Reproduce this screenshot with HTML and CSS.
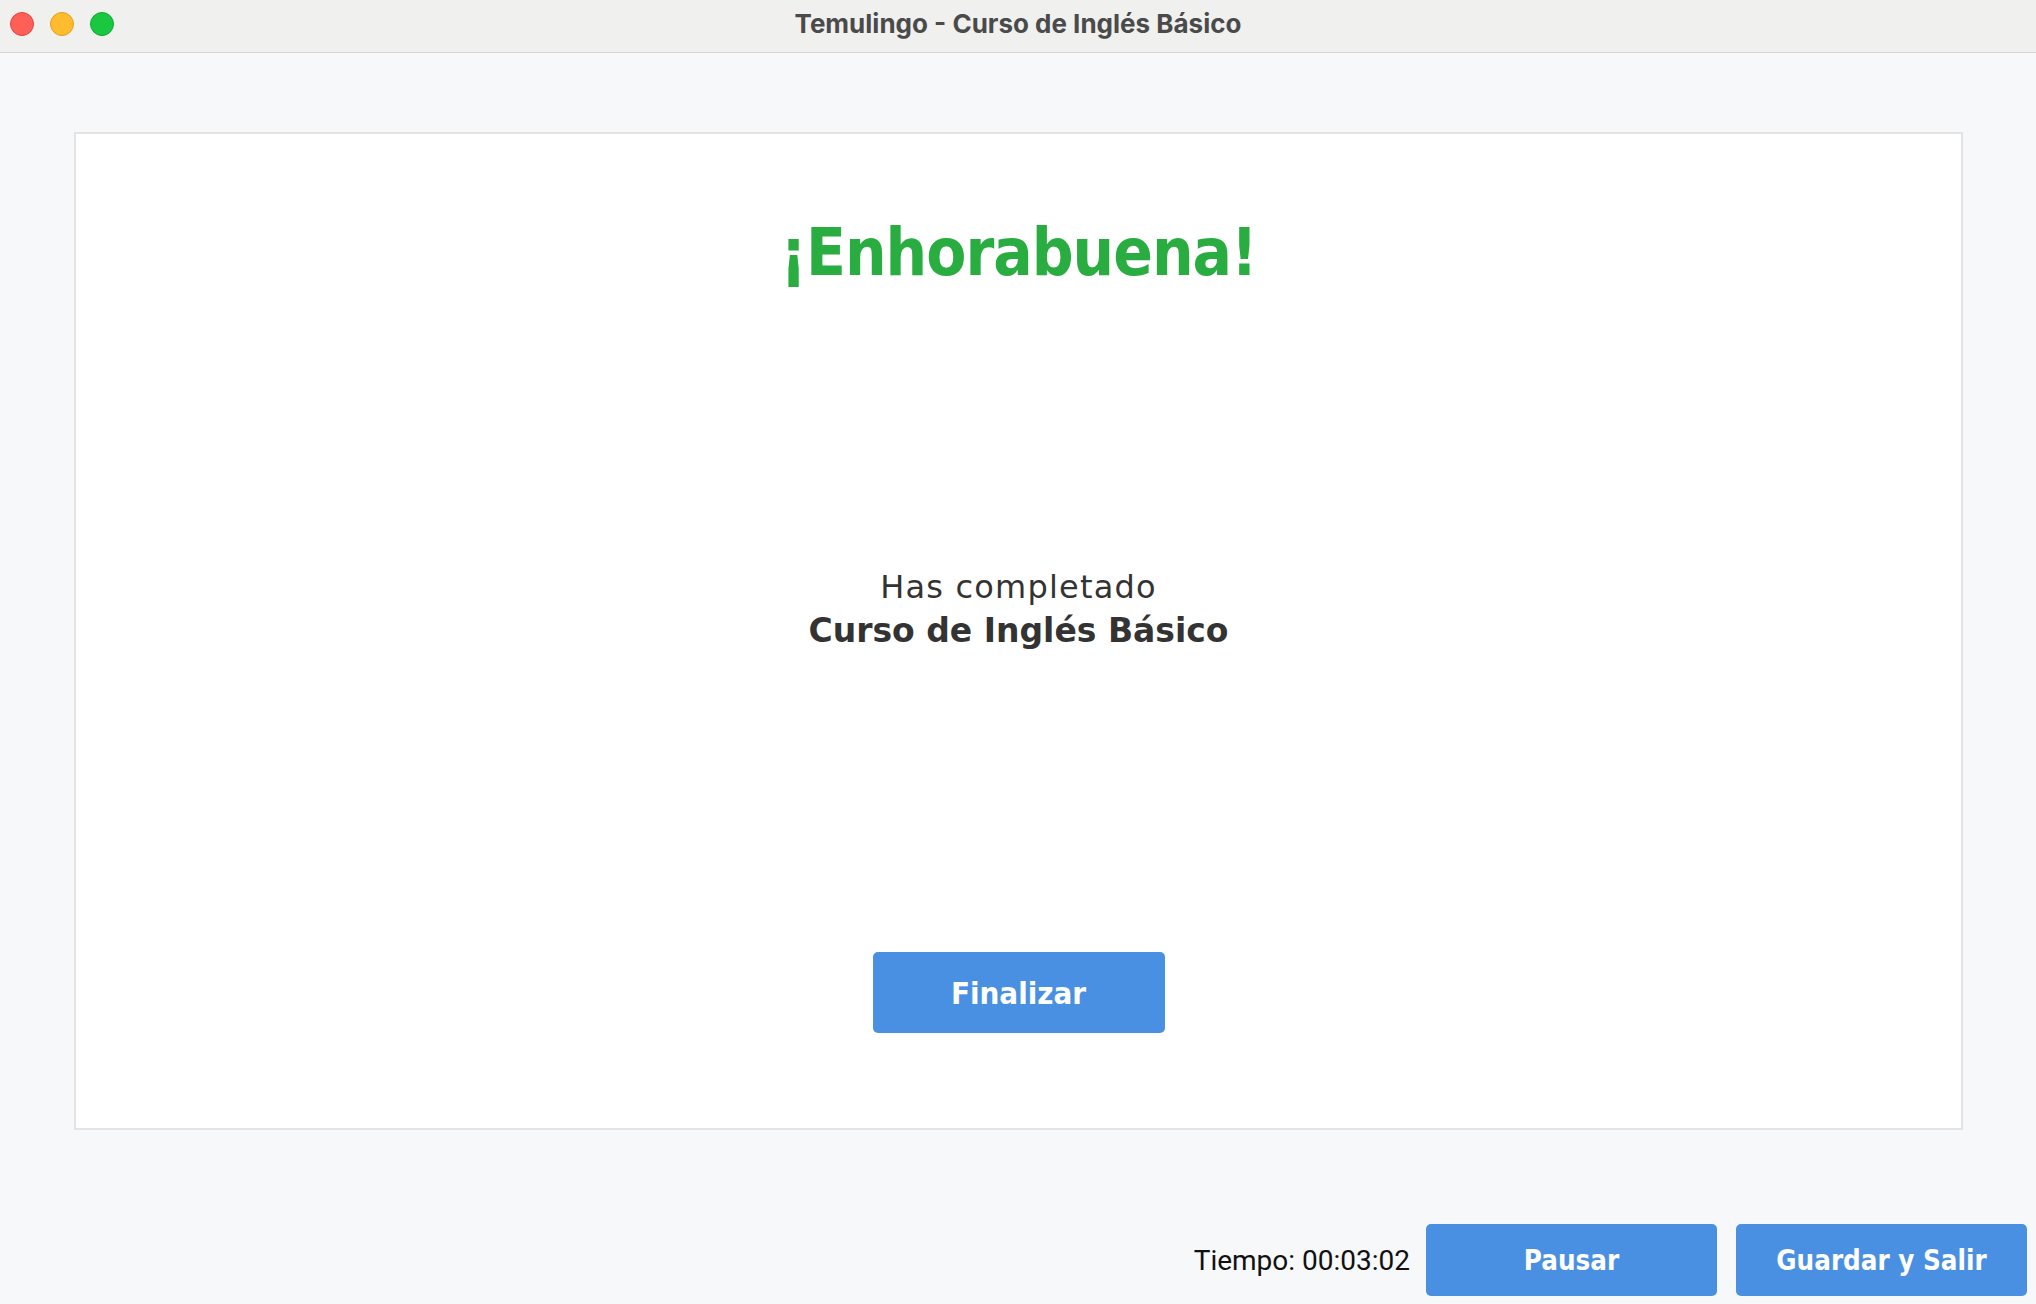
FILE: index.html
```html
<!DOCTYPE html>
<html lang="es">
<head>
<meta charset="utf-8">
<title>Temulingo - Curso de Inglés Básico</title>
<link rel="stylesheet" href="styles.css">
</head>
<body>
<div class="window">
  <header class="titlebar">
    <div class="lights">
      <span class="light red"></span>
      <span class="light yellow"></span>
      <span class="light green"></span>
    </div>
    <div class="title">Temulingo - Curso de Inglés Básico</div>
  </header>
  <main class="content">
    <section class="card">
      <h1 class="heading">¡Enhorabuena!</h1>
      <div class="message">
        <div class="line">Has completado</div>
        <div class="line strong">Curso de Inglés Básico</div>
      </div>
      <button class="btn btn-finish">Finalizar</button>
    </section>
    <footer class="footer">
      <span class="timer">Tiempo: 00:03:02</span>
      <button class="btn btn-foot">Pausar</button>
      <button class="btn btn-foot">Guardar y Salir</button>
    </footer>
  </main>
</div>
</body>
</html>
```

FILE: styles.css
```css
* { box-sizing: border-box; }
html, body { margin: 0; padding: 0; }
body {
  width: 2036px;
  height: 1304px;
  overflow: hidden;
  background: #f7f8fa;
  font-family: "DejaVu Sans", sans-serif;
}
.window {
  display: flex;
  flex-direction: column;
  height: 1304px;
}
.titlebar {
  position: relative;
  height: 53px;
  flex: none;
  background: #f0f0ef;
  border-bottom: 1px solid #d5d5d5;
  display: flex;
  align-items: center;
  justify-content: center;
}
.lights {
  position: absolute;
  left: 10px;
  top: 12px;
  display: flex;
  gap: 16px;
}
.light {
  width: 24px;
  height: 24px;
  border-radius: 50%;
  display: block;
}
.light.red { background: #fe5f57; border: 1px solid #e14640; }
.light.yellow { background: #febc2e; border: 1px solid #dea123; }
.light.green { background: #19c840; border: 1px solid #13a831; }
.title {
  font-family: Inter, "Liberation Sans", sans-serif;
  font-weight: 700;
  font-size: 26px;
  color: #4a4a4a;
  margin-top: -6px;
}
.content {
  flex: 1;
  display: flex;
  flex-direction: column;
  padding: 79px 9px 8px 74px;
}
.card {
  width: 1889px;
  height: 998px;
  flex: none;
  background: #ffffff;
  border: 2px solid #e3e3e3;
  display: flex;
  flex-direction: column;
  align-items: center;
}
.heading {
  margin: 79px 0 0 0;
  height: 80px;
  line-height: 80px;
  font-family: "DejaVu Sans Condensed", "DejaVu Sans", sans-serif;
  font-weight: 700;
  font-size: 65px;
  letter-spacing: -1px;
  color: #2aad40;
}
.message {
  margin-top: 272px;
  text-align: center;
  color: #333333;
  font-size: 32px;
  line-height: 44px;
}
.line { letter-spacing: 1.2px; }
.line.strong { font-weight: 700; font-size: 33px; letter-spacing: 0; }
.btn {
  border: none;
  background: #4a90e2;
  color: #ffffff;
  border-radius: 5px;
  font-family: "DejaVu Sans Condensed", "DejaVu Sans", sans-serif;
  font-weight: 700;
  padding: 0;
  cursor: pointer;
}
.btn-finish {
  margin-top: 299px;
  width: 292px;
  height: 81px;
  font-size: 31px;
}
.footer {
  margin-top: 94px;
  height: 72px;
  display: flex;
  align-items: center;
  justify-content: flex-end;
}
.timer {
  font-family: Roboto, "Liberation Sans", sans-serif;
  font-size: 28px;
  color: #111111;
  margin-right: 16px;
}
.btn-foot {
  width: 291px;
  height: 72px;
  font-size: 27.5px;
}
.btn-foot + .btn-foot { margin-left: 19px; }
```
